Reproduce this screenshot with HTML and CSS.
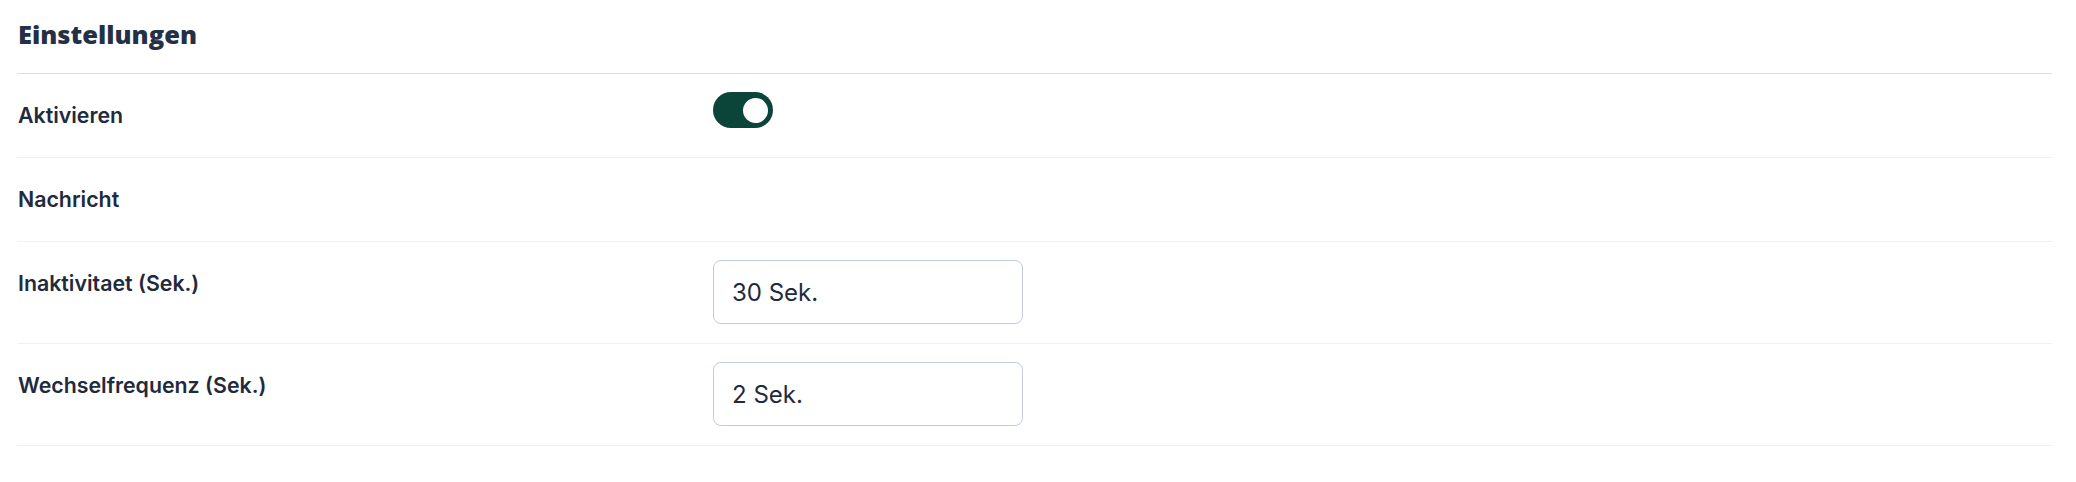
FILE: index.html
```html
<!DOCTYPE html>
<html lang="de">
<head>
<meta charset="utf-8">
<title>Einstellungen</title>
<link rel="stylesheet" href="styles.css">
</head>
<body>
<section class="settings">
  <h2 class="settings-title">Einstellungen</h2>
  <div class="row">
    <div class="label">Aktivieren</div>
    <div class="control">
      <button class="toggle is-on" type="button" aria-pressed="true"><span class="knob"></span></button>
    </div>
  </div>
  <div class="row">
    <div class="label">Nachricht</div>
    <div class="control"></div>
  </div>
  <div class="row">
    <div class="label">Inaktivitaet (Sek.)</div>
    <div class="control"><input class="field" type="text" value="30 Sek."></div>
  </div>
  <div class="row">
    <div class="label">Wechselfrequenz (Sek.)</div>
    <div class="control"><input class="field" type="text" value="2 Sek."></div>
  </div>
</section>
</body>
</html>
```
FILE: styles.css
```css
* { box-sizing: border-box; }
html, body { margin: 0; background: #ffffff; }
body { font-family: Inter, "Noto Sans", sans-serif; color: #1f2a3d; }

.settings {
  margin: 0 24px 0 17px;
}

.settings-title {
  margin: 0;
  padding: 18px 0 0 1px;
  height: 74px;
  font-family: "Open Sans", Roboto, sans-serif;
  font-weight: 800;
  font-size: 25.5px;
  line-height: 32px;
  letter-spacing: 0;
  color: #243044;
  border-bottom: 1px solid #dddee6;
}

.row {
  display: grid;
  grid-template-columns: 696px 1fr;
  padding: 18px 0 19px;
  border-bottom: 1px solid #f0f0f2;
}

.label {
  padding: 8px 0 8px 1px;
  min-height: 46px;
  font-size: 21.33px;
  line-height: 30px;
  font-weight: 600;
  color: #1f2a3d;
}

.control { display: flex; align-items: flex-start; }

.toggle {
  position: relative;
  width: 60px;
  height: 36px;
  padding: 0;
  border: 0;
  border-radius: 18px;
  background: #0b4439;
}
.knob {
  position: absolute;
  top: 6px;
  right: 5px;
  width: 25px;
  height: 25px;
  border-radius: 50%;
  background: #ffffff;
}

.field {
  width: 310px;
  height: 64px;
  padding: 0 18px;
  border: 1px solid #c1cce0;
  border-radius: 8px;
  font-family: Inter, "Noto Sans", sans-serif;
  font-size: 24px;
  color: #1f2a3d;
  background: #fff;
  outline: none;
}
```
